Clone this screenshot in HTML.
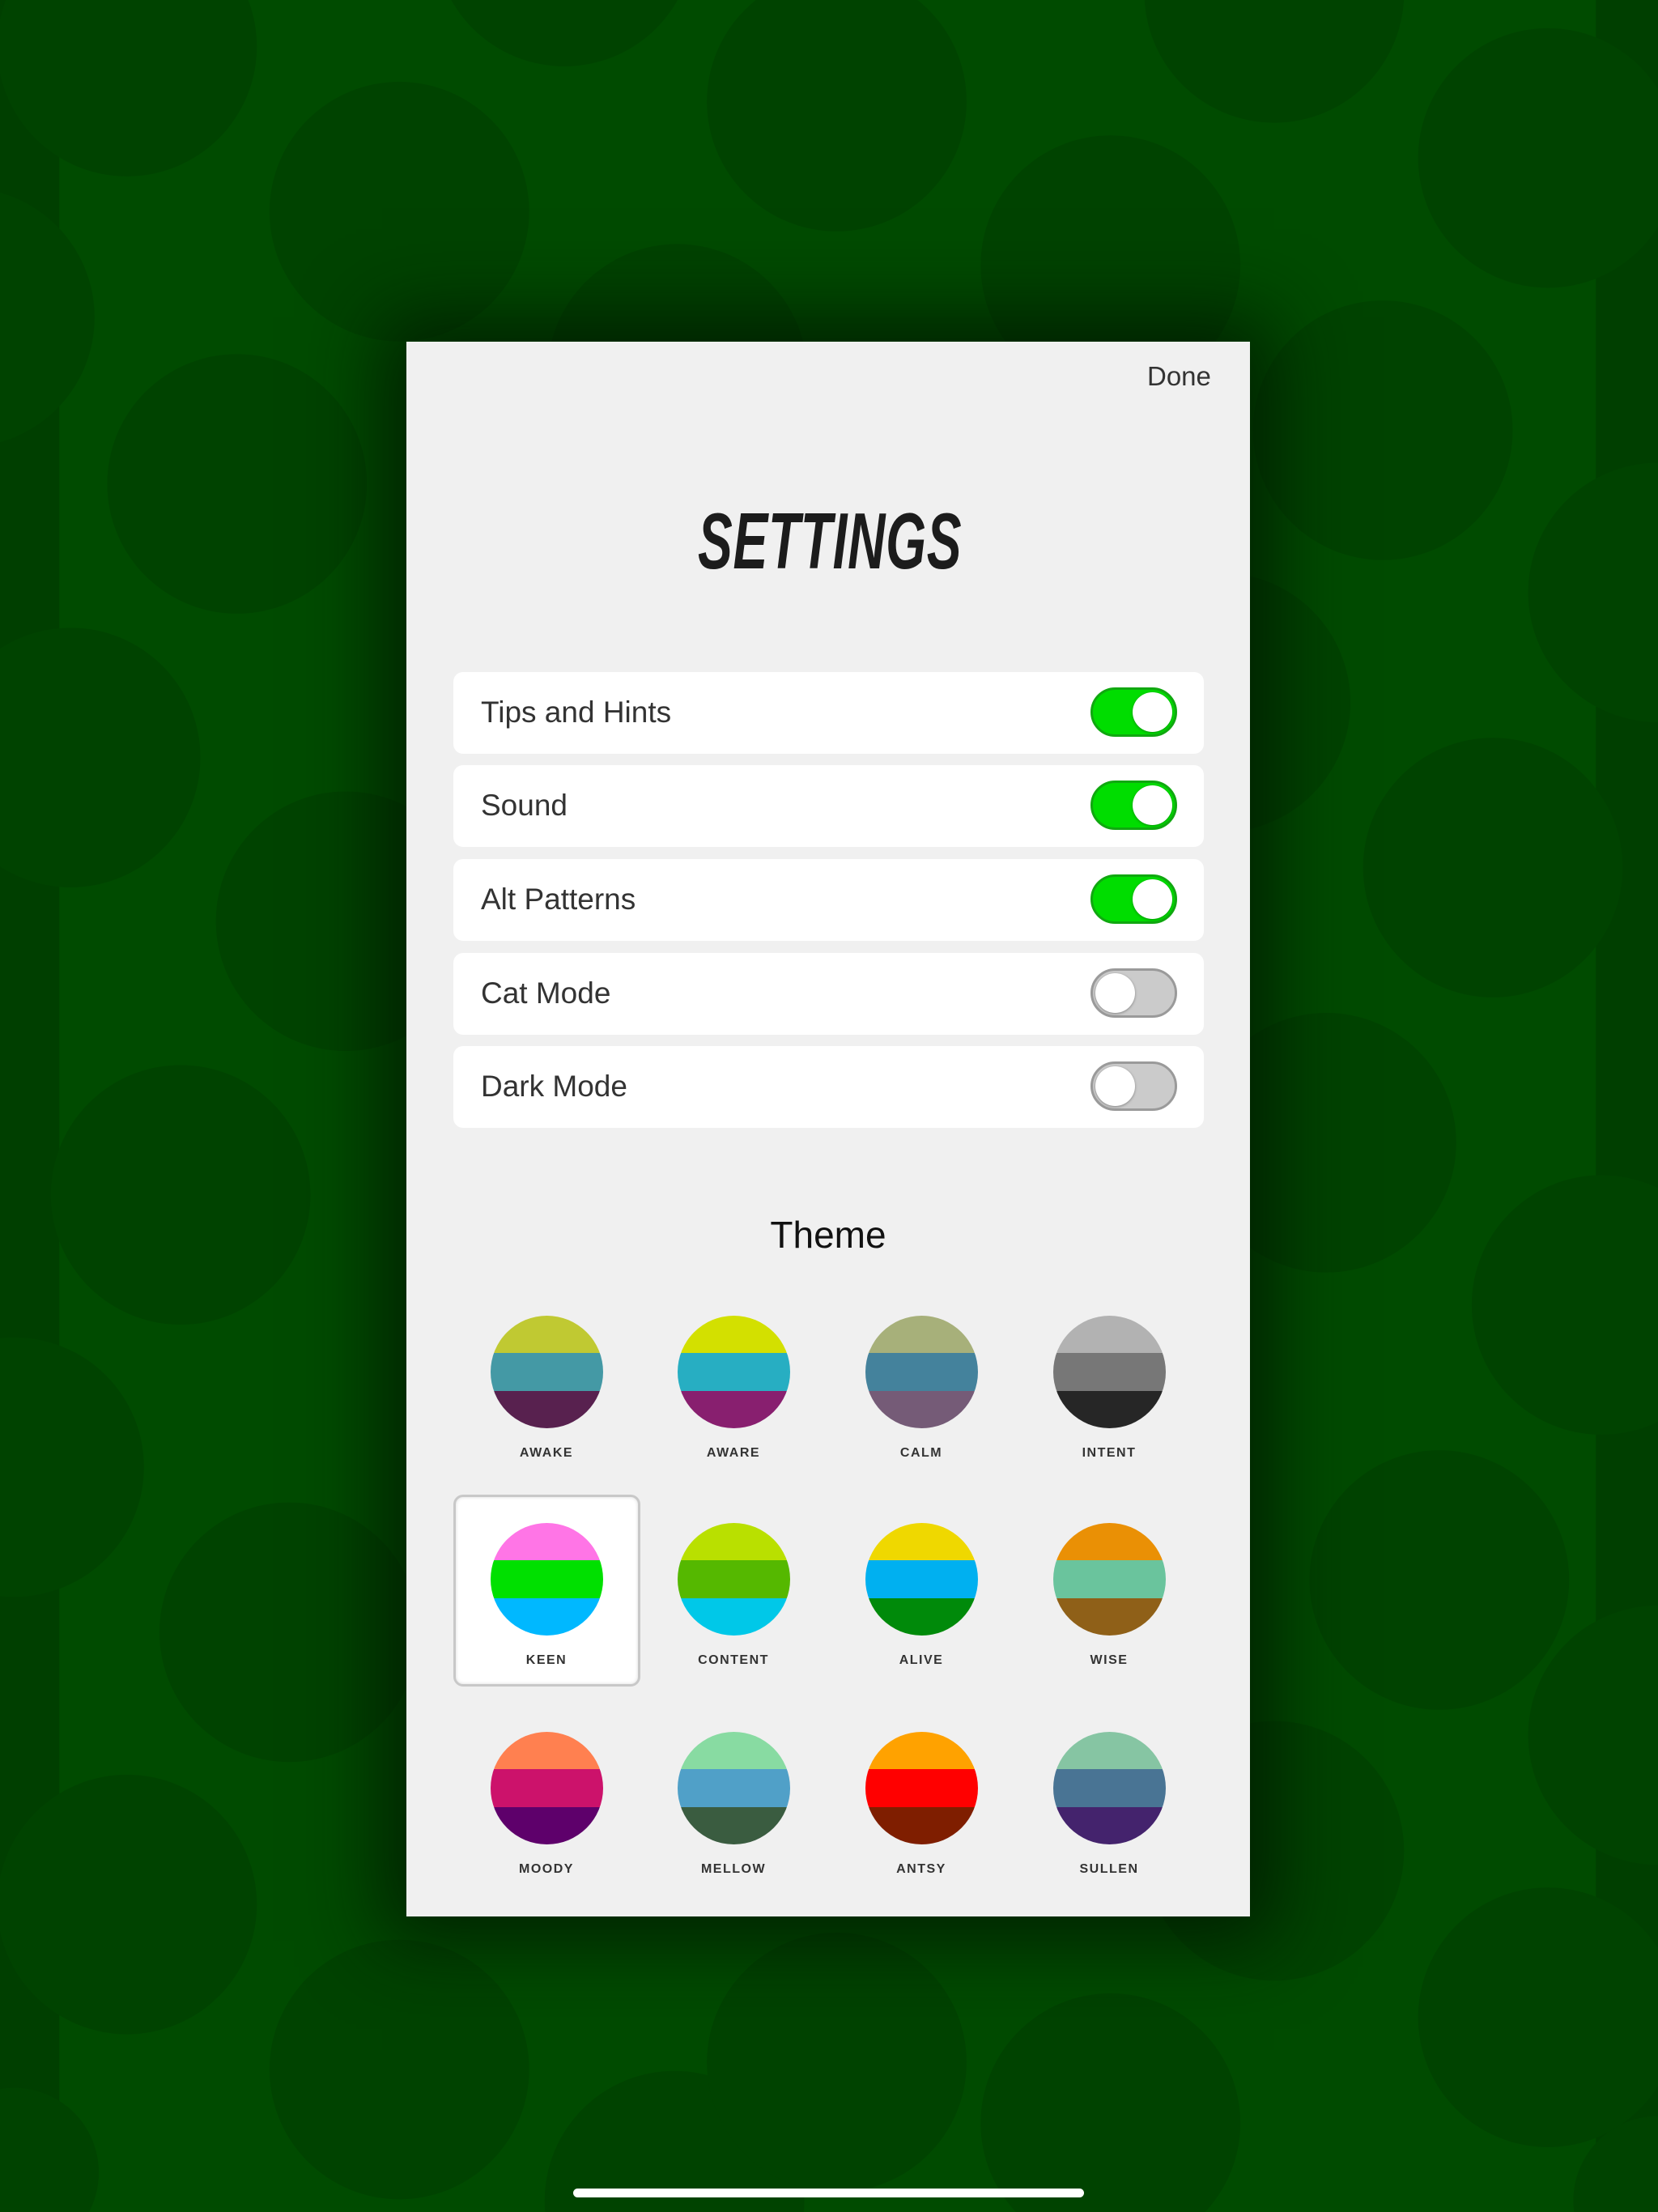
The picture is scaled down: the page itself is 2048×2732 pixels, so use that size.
<!DOCTYPE html>
<html><head><meta charset="utf-8">
<style>
html,body{margin:0;padding:0;width:2048px;height:2732px;overflow:hidden;}
body{position:relative;background:#004b00;font-family:"Liberation Sans",sans-serif;}
#bg{position:absolute;left:0;top:0;display:block;}
.panel{position:absolute;left:502px;top:422px;width:1042px;height:1945px;background:#f0f0f0;box-shadow:0 0 90px 30px rgba(0,20,0,0.75);}
.done{position:absolute;left:1417px;top:446px;font-size:33px;color:#333;}
.title{position:absolute;left:862px;top:612px;width:328px;height:100px;overflow:visible;}
.title span{display:inline-block;font-weight:bold;font-style:italic;font-size:98px;color:#1c1c1c;transform-origin:0 0;transform:scaleX(0.655);white-space:nowrap;letter-spacing:1px;}
.row{position:absolute;left:560px;width:927px;height:101px;background:#fff;border-radius:12px;}
.row .lbl{position:absolute;left:34px;top:29px;font-size:37px;color:#333;}
.tg{position:absolute;left:787px;top:19px;width:107px;height:61px;border-radius:31px;box-sizing:border-box;}
.tg.on{background:#00dd00;border:3px solid #10a810;}
.tg.off{background:#cbcbcb;border:3px solid #9a9a9a;}
.tg i{position:absolute;top:3px;width:49px;height:49px;border-radius:50%;background:#fff;box-shadow:0 1px 3px rgba(0,0,0,0.35);}
.tg.on i{left:49px;}
.tg.off i{left:3px;}
.theme{position:absolute;left:502px;width:1042px;top:1498px;text-align:center;font-size:46px;color:#111;}
.sel{position:absolute;left:560px;top:1846px;width:231px;height:237px;background:#fff;border:3px solid #c8c8c8;border-radius:12px;box-sizing:border-box;box-shadow:inset 0 0 4px rgba(0,0,0,0.15);}
.c{position:absolute;width:139px;height:139px;border-radius:50%;overflow:hidden;}
.c div{height:46.4px;}
.tl{position:absolute;width:200px;text-align:center;font-size:16px;font-weight:bold;letter-spacing:1.5px;color:#333;}
.home{position:absolute;left:708px;top:2703px;width:631px;height:11px;border-radius:6px;background:#fff;}
</style></head><body>
<svg id="bg" width="2048" height="2732" viewBox="0 0 1175 1568" preserveAspectRatio="none">
<rect x="0" y="0" width="1175" height="1568" fill="#004b00"/>
<rect x="0" y="0" width="42" height="1568" fill="#003f00"/>
<rect x="1131" y="0" width="44" height="1568" fill="#003f00"/>
<g fill="#004300">
<circle cx="90" cy="33" r="92"/><circle cx="283" cy="150" r="92"/><circle cx="400" cy="-45" r="92"/>
<circle cx="593" cy="72" r="92"/><circle cx="903" cy="-5" r="92"/><circle cx="787" cy="188" r="92"/>
<circle cx="1097" cy="112" r="92"/><circle cx="168" cy="343" r="92"/><circle cx="480" cy="265" r="92"/>
<circle cx="980" cy="305" r="92"/><circle cx="-25" cy="225" r="92"/><circle cx="50" cy="537" r="92"/>
<circle cx="245" cy="653" r="92"/><circle cx="128" cy="847" r="92"/><circle cx="10" cy="1040" r="92"/>
<circle cx="205" cy="1157" r="92"/><circle cx="90" cy="1350" r="92"/><circle cx="283" cy="1467" r="92"/>
<circle cx="478" cy="1560" r="92"/><circle cx="593" cy="1462" r="92"/><circle cx="787" cy="1505" r="92"/>
<circle cx="903" cy="1312" r="92"/><circle cx="1097" cy="1430" r="92"/><circle cx="1058" cy="615" r="92"/>
<circle cx="1135" cy="925" r="92"/><circle cx="1020" cy="1120" r="92"/><circle cx="940" cy="810" r="92"/>
<circle cx="865" cy="498" r="92"/><circle cx="1175" cy="420" r="92"/><circle cx="1175" cy="1230" r="92"/>
<circle cx="10" cy="1540" r="60"/><circle cx="1175" cy="1560" r="60"/>
</g>
</svg>
<div class="panel"></div>
<div class="done">Done</div>
<div class="title"><span>SETTINGS</span></div>

<div class="row" style="top:830px"><div class="lbl">Tips and Hints</div><div class="tg on"><i></i></div></div>
<div class="row" style="top:945px"><div class="lbl">Sound</div><div class="tg on"><i></i></div></div>
<div class="row" style="top:1061px"><div class="lbl">Alt Patterns</div><div class="tg on"><i></i></div></div>
<div class="row" style="top:1177px"><div class="lbl">Cat Mode</div><div class="tg off"><i></i></div></div>
<div class="row" style="top:1292px"><div class="lbl">Dark Mode</div><div class="tg off"><i></i></div></div>

<div class="theme">Theme</div>
<div class="sel"></div>

<div class="c" style="left:606px;top:1625px"><div style="background:#c0c932"></div><div style="background:#4499a5"></div><div style="background:#58214f"></div></div>
<div class="c" style="left:837px;top:1625px"><div style="background:#d3e000"></div><div style="background:#27aec2"></div><div style="background:#881f6f"></div></div>
<div class="c" style="left:1069px;top:1625px"><div style="background:#a7b07a"></div><div style="background:#44829c"></div><div style="background:#755b77"></div></div>
<div class="c" style="left:1301px;top:1625px"><div style="background:#b2b2b2"></div><div style="background:#777777"></div><div style="background:#262626"></div></div>
<div class="tl" style="left:575px;top:1786px">AWAKE</div>
<div class="tl" style="left:806px;top:1786px">AWARE</div>
<div class="tl" style="left:1038px;top:1786px">CALM</div>
<div class="tl" style="left:1270px;top:1786px">INTENT</div>

<div class="c" style="left:606px;top:1881px"><div style="background:#ff75e6"></div><div style="background:#00e000"></div><div style="background:#00b8ff"></div></div>
<div class="c" style="left:837px;top:1881px"><div style="background:#b9e000"></div><div style="background:#55b800"></div><div style="background:#00c8e8"></div></div>
<div class="c" style="left:1069px;top:1881px"><div style="background:#efd800"></div><div style="background:#00b0f0"></div><div style="background:#008a0a"></div></div>
<div class="c" style="left:1301px;top:1881px"><div style="background:#ea9005"></div><div style="background:#6ac49d"></div><div style="background:#8f6018"></div></div>
<div class="tl" style="left:575px;top:2042px">KEEN</div>
<div class="tl" style="left:806px;top:2042px">CONTENT</div>
<div class="tl" style="left:1038px;top:2042px">ALIVE</div>
<div class="tl" style="left:1270px;top:2042px">WISE</div>

<div class="c" style="left:606px;top:2139px"><div style="background:#ff8050"></div><div style="background:#cc126b"></div><div style="background:#5e006b"></div></div>
<div class="c" style="left:837px;top:2139px"><div style="background:#88dba2"></div><div style="background:#50a0c8"></div><div style="background:#3a5c40"></div></div>
<div class="c" style="left:1069px;top:2139px"><div style="background:#ffa200"></div><div style="background:#ff0000"></div><div style="background:#7f1e00"></div></div>
<div class="c" style="left:1301px;top:2139px"><div style="background:#86c5a3"></div><div style="background:#497494"></div><div style="background:#44236d"></div></div>
<div class="tl" style="left:575px;top:2300px">MOODY</div>
<div class="tl" style="left:806px;top:2300px">MELLOW</div>
<div class="tl" style="left:1038px;top:2300px">ANTSY</div>
<div class="tl" style="left:1270px;top:2300px">SULLEN</div>

<div class="home"></div>
</body></html>
